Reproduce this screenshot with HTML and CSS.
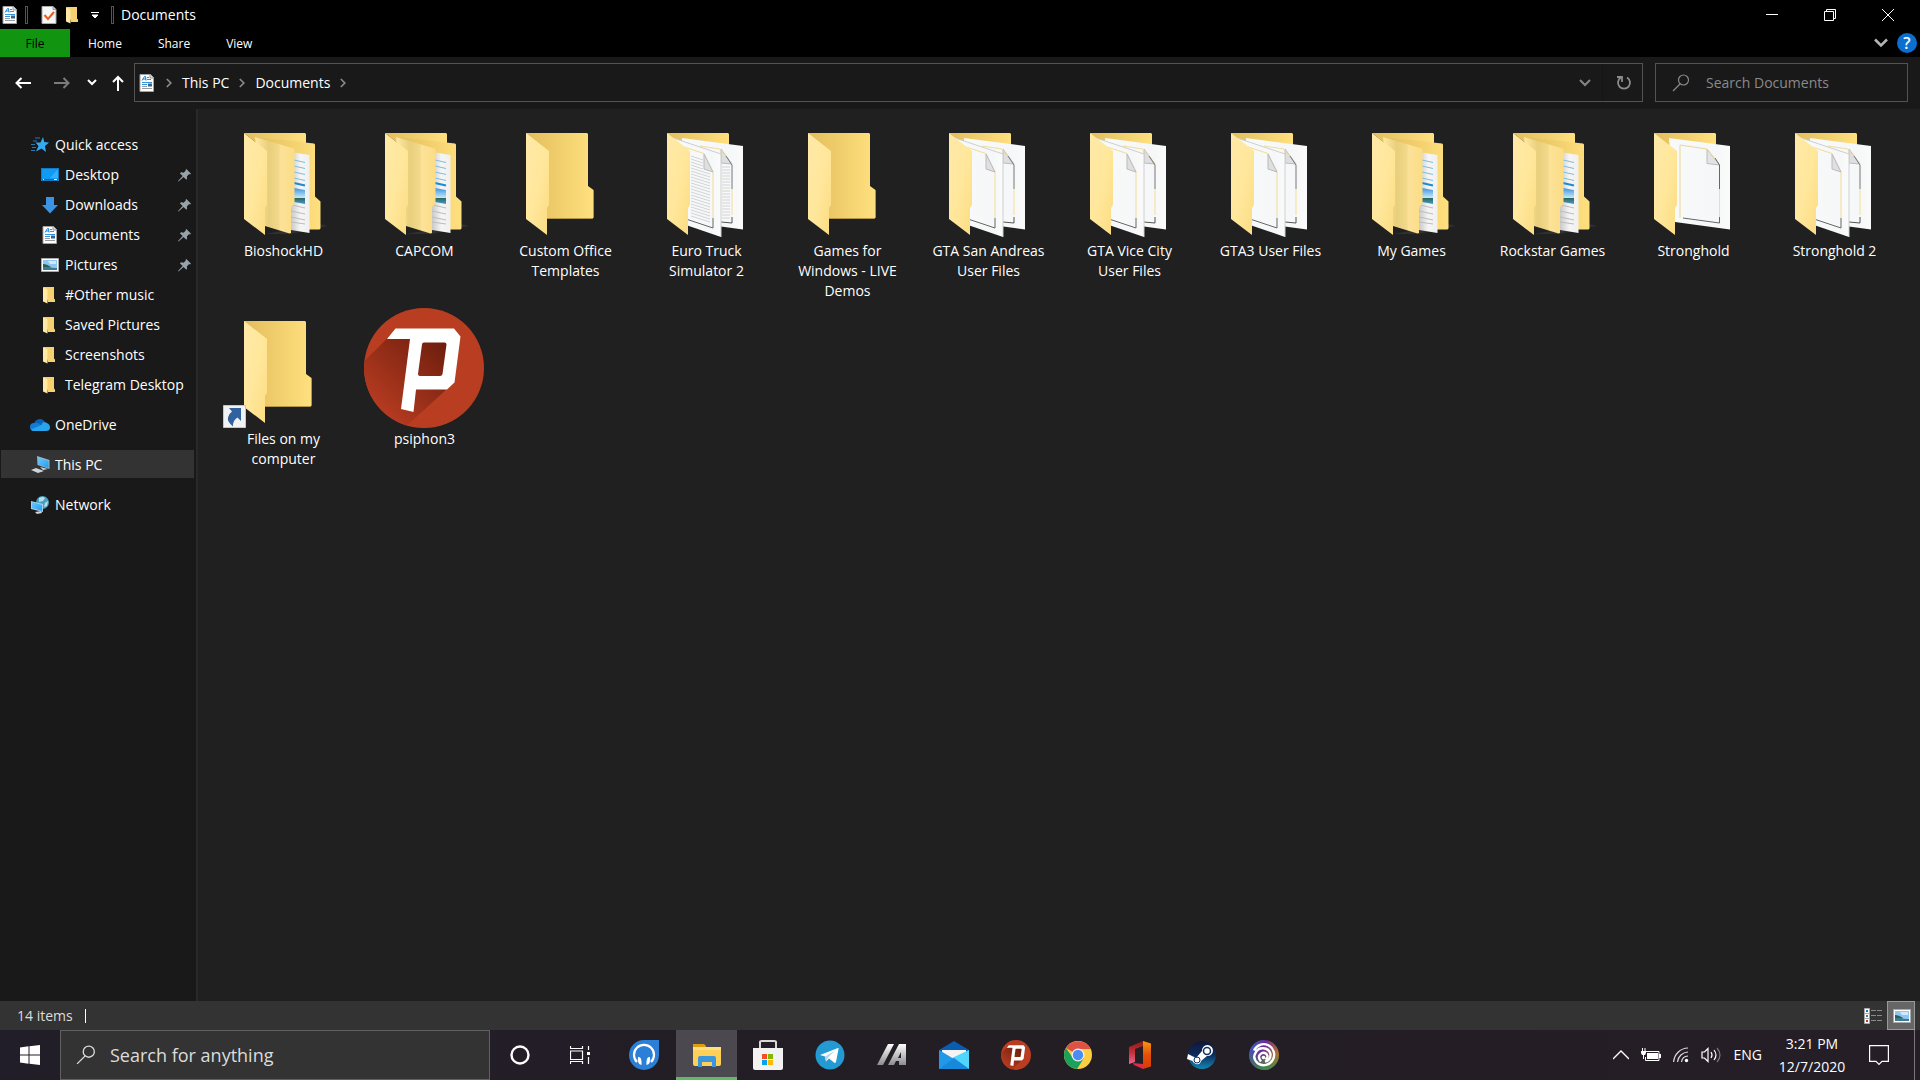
FILE: index.html
```html
<!DOCTYPE html>
<html lang="en">
<head>
<meta charset="utf-8">
<title>Documents</title>
<link rel="stylesheet" href="styles.css">
</head>
<body>
<svg class="sprite" width="0" height="0" aria-hidden="true">
  <defs>
    <linearGradient id="g-back"><stop offset="0" stop-color="#e3bd5b"/><stop offset="1" stop-color="#ffe07f"/></linearGradient>
    <linearGradient id="g-flap" x2="1" y2="1"><stop offset="0" stop-color="#ffe9a8"/><stop offset=".5" stop-color="#ffe79c"/><stop offset="1" stop-color="#fcdc82"/></linearGradient>
    <linearGradient id="g-inner"><stop offset="0" stop-color="#ffe8a2"/><stop offset=".35" stop-color="#e8cf7d"/><stop offset=".6" stop-color="#f2d98a"/><stop offset=".65" stop-color="#fce299"/><stop offset="1" stop-color="#fcdd85"/></linearGradient>
    <linearGradient id="g-paper"><stop offset="0" stop-color="#f8fafa"/><stop offset=".8" stop-color="#f6f7f8"/><stop offset="1" stop-color="#fbfbfb"/></linearGradient>
    <linearGradient id="g-page"><stop offset="0" stop-color="#c9c9c9"/><stop offset=".5" stop-color="#f5f5f5"/><stop offset="1" stop-color="#f0f0f0"/></linearGradient>
    <linearGradient id="g-sky" x2="0" y2="1"><stop offset="0" stop-color="#3a96e4"/><stop offset=".6" stop-color="#c5e6f7"/><stop offset=".65" stop-color="#2d6a5c"/><stop offset="1" stop-color="#4799cf"/></linearGradient>
    <linearGradient id="g-shade" x1="1" y1="0" x2="0" y2="1"><stop offset="0.1" stop-color="#701f0e"/><stop offset=".8" stop-color="#b33a20"/></linearGradient>
    <linearGradient id="g-screen" x2="1" y2="1"><stop offset="0" stop-color="#6ec6fb"/><stop offset=".5" stop-color="#45b3fa"/><stop offset="1" stop-color="#1e9df5"/></linearGradient>
    <linearGradient id="g-silver" x2="0" y2="1"><stop offset="0" stop-color="#fff"/><stop offset="1" stop-color="#8d8d90"/></linearGradient>
    <linearGradient id="g-steam" x2="0" y2="1"><stop offset="0" stop-color="#10163a"/><stop offset=".5" stop-color="#0d2d5c"/><stop offset="1" stop-color="#1287b8"/></linearGradient>
    <linearGradient id="g-office" x2="0" y2="1"><stop offset="0" stop-color="#f69a10"/><stop offset=".5" stop-color="#e2500b"/><stop offset="1" stop-color="#d83b01"/></linearGradient>
    <linearGradient id="g-officeleft" x2="0" y2="1"><stop offset="0" stop-color="#8b1a10"/><stop offset=".5" stop-color="#c62f3a"/><stop offset="1" stop-color="#e66a8e"/></linearGradient>
    <linearGradient id="g-ubi" x2="1" y2=".4"><stop offset="0" stop-color="#2b6fc0"/><stop offset=".5" stop-color="#6d2a9b"/><stop offset="1" stop-color="#b8722a"/></linearGradient>
    <linearGradient id="g-ubi2" x2="0" y2="1"><stop offset=".4" stop-color="#3b8a3c" stop-opacity="0"/><stop offset="1" stop-color="#3a8a52"/></linearGradient>

    <symbol id="doc" viewBox="0 0 18 18">
      <path d="M2 .5h10.500l3 3v14h-13.500z" fill="#fdfdfd" stroke="#a3a3a3"/><path d="M12 .5v3.500h3.500" fill="#ddd" stroke="#999"/>
      <path d="M4 6.500 6.500 2.500h1l.5 4M5 5h3" fill="none" stroke="#1784d6"/><path d="M9 3.500h2M9 5.500h4M4 8.500h10M4 10.500h5" stroke="#3294dc"/><path d="M4 12.500h5M4 14.500h10" stroke="#999"/><path d="M10 9.500h4v3h-4z" fill="#34658d"/>
    </symbol>
    <symbol id="check" viewBox="0 0 18 18"><path d="M2 .5h11l3 3v14h-14z" fill="#f7f7f7" stroke="#aaa"/><path d="M13 .5v3h3" fill="#ccc" stroke="#999"/><path d="m4.500 9 3.500 4 6-7" fill="none" stroke="#ee5a1c" stroke-width="2"/></symbol>
    <symbol id="mini" viewBox="0 0 18 18"><path d="M2.500 1h10.500v11.500l1 1v2.500h-7z" fill="#f5d171"/><path d="m2 1 4.500 2.500v14l-4.500-2z" fill="#ffe9a5"/></symbol>
    <symbol id="star" viewBox="0 0 18 18"><path d="m12 1 1.300 5 4.700.5-4 3.500 1 6-4.500-3.500-5.500 3 2.500-5.500-3-3.500h5z" fill="#35a8f0"/><path d="M4 2h5M2 5h4M0 8.500h4M1 11.500h4M0 14.500h4" stroke="#2579b5"/></symbol>
    <symbol id="desktop" viewBox="0 0 18 18"><path d="M0 2h18v13h-18z" fill="#0f9bf5"/><path d="M9 12 17 3v9z" fill="#34b0fa"/><path d="M.5 2.500h17v12h-17z" fill="none" stroke="#1479be"/><path d="M1 13.500h16" stroke="#0b69ae"/><path d="M2 13.500h1M13 13.500h3" stroke="#fff"/></symbol>
    <symbol id="down" viewBox="0 0 18 18"><path d="M5 1h8v8h4l-8 8.500-8-8.500h4z" fill="#3a93e4"/></symbol>
    <symbol id="pic" viewBox="0 0 18 18"><path d="M.5 2.500h17v13h-17z" fill="#fff" stroke="#aaa"/><path d="M2 4h14v10h-14z" fill="#8ec6f2"/><path d="M2 8q4 1 6 2.500t8 1.500v2h-14z" fill="#3d7a92"/><path d="M2 8q4 0 8 3h-8z" fill="#28614c"/><path d="M7 5h8v3h-6z" fill="#d2e8f8"/></symbol>
    <symbol id="cloud" viewBox="0 0 20 14"><path d="M4 6a6 6 0 0 1 11-2q-5 3-7 5z" fill="#0a62b8"/><path d="M4 13a4 4 0 0 1 0-8q4-1 7 2l4 6z" fill="#127cd5"/><path d="M11 7q2-4 5-2.500 4 1.500 4 5t-4 3.500H4q-2 0-3-1.500z" fill="#27a4ec"/></symbol>
    <symbol id="pc" viewBox="0 0 20 18"><path d="m7 0 12.500 4v9l-12-4z" fill="#9bb4c4"/><path d="m8 1.500 10.500 3.500v7l-10-3.500z" fill="url(#g-screen)"/><path d="m10 11 8 2-5 1zM1 14l5-2 8 3-6 2z" fill="#cdd3d8"/></symbol>
    <symbol id="net" viewBox="0 0 18 18"><circle cx="11.500" cy="6.500" r="6.500" fill="#4a9ec2"/><path d="M8 2q4-2 6 0l-2 3-4 1zM14 7l3-2-1 5-3 1z" fill="#b5dfe8"/><path d="m0 5 12 3v8l-12-3z" fill="#a9cde6"/><path d="m1 6 10 3v6L1 12z" fill="url(#g-screen)"/><path d="m4 16 6-1 1 2-5 1z" fill="#d0d5d8"/></symbol>
    <symbol id="pin" viewBox="0 0 14 14"><path d="m9 0 5 5-1 1-1-.5-2.500 2.500q1 2-.5 3.500L6 8.500.5 13.500 0 13 5 7.500 2 4.500Q3.500 3 6 4l2.500-2.500L8 1z" fill="#98a2a9"/></symbol>
    <symbol id="right" viewBox="0 0 6 10"><path d="m.8 1 4 4-4 4" fill="none" stroke="#8a8a8a" stroke-width="1.700"/></symbol>
    <symbol id="lens" viewBox="0 0 18 18"><circle cx="11.500" cy="6" r="5" fill="none" stroke="currentColor" stroke-width="1.200"/><path d="m8 10-7 7" stroke="currentColor" stroke-width="1.200"/></symbol>

    <symbol id="flap" viewBox="0 0 120 120"><path d="m21 13 23 18v54l-2 3v27L21 99z" fill="url(#g-flap)"/></symbol>
    <symbol id="empty" viewBox="0 0 120 120"><path d="M21 13h61l1 1v52l5.500 4v27l-1 1.500H40z" fill="url(#g-back)"/><path d="M42 98.500h45.500l1-1v-27" fill="none" stroke="#b49643"/><use href="#flap"/></symbol>
    <symbol id="docs" viewBox="0 0 120 120">
      <path d="m42 114 55-10 8 2-17 3-20 5z" fill="#303030"/><path d="M21 13h61l1 1v14H40z" fill="url(#g-back)"/><path d="m32 17 59 6.500 1 1v52l5.500 5v27l-1 1H70z" fill="url(#g-back)"/>
      <path d="m68 32 18.500 3v78L68 110z" fill="url(#g-page)"/><path d="m71 40 11 2.500M71 46l11 2.500M71 52l11 2.500M71 58l11 2.500" stroke="#79bddf"/><path d="m71 63 11 2.500" stroke="#1c8bd0" stroke-width="2"/><path d="m71 68 11 2v14l-11-2z" fill="url(#g-sky)"/><path d="m69 85 13 3m-14 3 14 3m-14 3 14 3m-14 2 14 2" stroke="#bcbcbc"/>
      <path d="m32 17 38.500 11.500 1 1.500v54L68 87v26l-1.500 .5L42 106z" fill="url(#g-inner)"/><use href="#flap"/>
    </symbol>
    <symbol id="papers" viewBox="0 0 120 120">
      <path d="M21 13h61l1 1v40H40z" fill="url(#g-back)"/>
      <g transform="translate(-4)">
        <path d="m40 18 61 8v83.500L46 102z" fill="url(#g-paper)"/><path d="m79 29 11 15-11-1z" fill="#dedfe1" stroke="#bcbcbc"/>
        <path d="m58 26 20 3 12 15" fill="none" stroke="#f0dc9b"/><path d="M84 36l6 9v24" fill="none" stroke="#777"/><path d="M90 69v26" stroke="#f6df96"/><path d="M90 97v6l-11-1" fill="none" stroke="#555"/>
        <path d="m31 18 48 16v83l-35-12z" fill="url(#g-paper)"/><path d="m31 18 48 16v83" fill="none" stroke="#cfcfcf"/><path d="m42 27 20 6.500 9 18.500v46" fill="none" stroke="#f2dc96"/><path d="M62 34v15l9 3z" fill="#dfdfe1" stroke="#bbb"/><path d="M71 98v10l-27-9" fill="none" stroke="#666"/>
      </g>
      <use href="#flap"/>
    </symbol>
    <symbol id="lined" viewBox="0 0 120 120">
      <use href="#papers"/>
      <path d="M76 47h8M76 50h8M76 53h8M76 56h8M76 59h8M76 62h8M76 65h8M76 68h8M76 71h8M76 74h8M76 77h8M76 80h8M76 83h8M76 86h8M76 89h8M76 92h8M76 95h8M76 98h8" stroke="#d4d4d4"/>
      <path d="m45 36 12 4m-12-1 12 4m-12-1 12 4m-12-1 12 4m-12-1 19 6m-19-3 19 6m-19-3 19 6m-19-3 19 6m-19-3 19 6m-19-3 19 6m-19-3 19 6m-19-3 19 6m-19-3 19 6m-19-3 19 6m-19-3 19 6m-19-3 19 6m-19-3 19 6m-19-3 19 6m-19-3 19 6m-19-3 19 6m-19-3 19 6" stroke="#d2d4d5"/>
    </symbol>
    <symbol id="single" viewBox="0 0 120 120">
      <path d="M21 13h61l1 1v40H40z" fill="url(#g-back)"/><path d="m36 18 61 8v83.500L42 102z" fill="url(#g-paper)"/><path d="m74 29 12.500 16-12.500-1.500z" fill="#e3e3e5" stroke="#bbb"/><path d="M47 98V25l27 4 12.500 16" fill="none" stroke="#ead69a"/><path d="M82 38l4.500 7v24" fill="none" stroke="#666"/><path d="M86.500 69v28" stroke="#f6df96"/><path d="M86.500 97v6L50 98" fill="none" stroke="#666"/><use href="#flap"/>
    </symbol>
    <symbol id="shortcut" viewBox="0 0 120 120"><use href="#empty"/><path d="M.5 97.500h22v22H.5z" fill="#f1f2f3" stroke="#c5c5c5"/><path d="M6 100h12v13l-3.500-3.500q-5 3-4.500 9-6-5-5-9 1-4 4-6z" fill="#31629f"/></symbol>
    <symbol id="psiphon" viewBox="0 0 120 120"><circle cx="60" cy="60" r="60" fill="#b93e21"/><path d="M23 30.500 0.500 53A60 60 0 0 0 43 117.500L83 81l7-50z" fill="url(#g-shade)"/><path fill-rule="evenodd" d="M31.500 20.500H90l6.500 8-6 46-7.500 7H52l-2.500 22.500-12.500-3L46 31H23zM60 34.500q-2 0-2 2L54 66q0 2 2 2h20q2 0 2.500-2l4-29.500q0-2-2-2z" fill="#fff"/></symbol>
  </defs>
</svg>

<div class="window">
  <header class="titlebar">
    <div class="quick">
      <svg class="i18"><use href="#doc"/></svg><span class="rule"></span>
      <button aria-label="Properties"><svg class="i18"><use href="#check"/></svg></button>
      <button aria-label="New folder"><svg class="i18"><use href="#mini"/></svg></button>
      <button class="more" aria-label="Customize"><svg width="8" height="6"><path d="M0 .5h8M1 3h6L4 6z" stroke="#fff" stroke-width="1" fill="#fff"/></svg></button>
      <span class="rule"></span>
    </div>
    <h1>Documents</h1>
    <div class="controls">
      <button aria-label="Minimize"><svg width="12" height="12"><path d="M0 5.500h12" stroke="#fff"/></svg></button>
      <button aria-label="Restore"><svg width="12" height="12" fill="none" stroke="#fff"><path d="M.5 2.500h9v9h-9zM2.500 2V.5h9v9H10"/></svg></button>
      <button aria-label="Close"><svg width="12" height="12" stroke="#fff"><path d="m0 0 12 12M12 0 0 12"/></svg></button>
    </div>
  </header>

  <nav class="ribbon">
    <button class="file">File</button><button>Home</button><button>Share</button><button>View</button>
    <div class="ribbon-end">
      <button aria-label="Expand ribbon"><svg width="14" height="10"><path d="m1 1.500 6 6 6-6" fill="none" stroke="#b5b5b5" stroke-width="2.500"/></svg></button>
      <button class="help" aria-label="Help">?</button>
    </div>
  </nav>

  <div class="toolbar">
    <div class="history">
      <button aria-label="Back"><svg width="16" height="12"><path d="M16 6H2M6.500 1l-5 5 5 5" fill="none" stroke="#fff" stroke-width="2"/></svg></button>
      <button aria-label="Forward"><svg width="16" height="12"><path d="M0 6h14M9.500 1l5 5-5 5" fill="none" stroke="#7c7c7c" stroke-width="2"/></svg></button>
      <button class="recent" aria-label="Recent"><svg width="10" height="7"><path d="m1 1 4 4 4-4" fill="none" stroke="#fff" stroke-width="2"/></svg></button>
      <button class="up" aria-label="Up"><svg width="12" height="16"><path d="M6 16V2M1 7l5-5 5 5" fill="none" stroke="#fff" stroke-width="2"/></svg></button>
    </div>
    <div class="address">
      <svg class="i18"><use href="#doc"/></svg>
      <svg class="sep"><use href="#right"/></svg><a href="#pc">This PC</a>
      <svg class="sep"><use href="#right"/></svg><a href="#documents">Documents</a>
      <svg class="sep"><use href="#right"/></svg>
      <button class="drop" aria-label="Previous locations"><svg width="12" height="8"><path d="m1 1 5 5 5-5" fill="none" stroke="#858585" stroke-width="2"/></svg></button>
      <button class="refresh" aria-label="Refresh"><svg width="16" height="16"><path d="M5 2.500A6 6 0 1 0 11 2.500M1 2h5v5" fill="none" stroke="#8c8c8c" stroke-width="1.800"/></svg></button>
    </div>
    <label class="find"><svg class="i18"><use href="#lens"/></svg><input type="search" placeholder="Search Documents" aria-label="Search Documents"></label>
  </div>

  <div class="body">
    <nav class="side">
      <ul>
        <li><a href="#quick"><svg class="i18"><use href="#star"/></svg>Quick access</a></li>
        <li class="sub"><a href="#d1"><svg class="i18"><use href="#desktop"/></svg>Desktop<svg class="pin"><use href="#pin"/></svg></a></li>
        <li class="sub"><a href="#d2"><svg class="i18"><use href="#down"/></svg>Downloads<svg class="pin"><use href="#pin"/></svg></a></li>
        <li class="sub"><a href="#d3"><svg class="i18"><use href="#doc"/></svg>Documents<svg class="pin"><use href="#pin"/></svg></a></li>
        <li class="sub"><a href="#d4"><svg class="i18"><use href="#pic"/></svg>Pictures<svg class="pin"><use href="#pin"/></svg></a></li>
        <li class="sub"><a href="#d5"><svg class="i18"><use href="#mini"/></svg>#Other music</a></li>
        <li class="sub"><a href="#d6"><svg class="i18"><use href="#mini"/></svg>Saved Pictures</a></li>
        <li class="sub"><a href="#d7"><svg class="i18"><use href="#mini"/></svg>Screenshots</a></li>
        <li class="sub"><a href="#d8"><svg class="i18"><use href="#mini"/></svg>Telegram Desktop</a></li>
      </ul>
      <ul><li><a href="#onedrive"><svg class="i20"><use href="#cloud"/></svg>OneDrive</a></li></ul>
      <ul><li class="current"><a href="#pc"><svg class="i20"><use href="#pc"/></svg>This PC</a></li></ul>
      <ul><li><a href="#network"><svg class="i18"><use href="#net"/></svg>Network</a></li></ul>
    </nav>
    <main class="files">
      <button><svg><use href="#docs"/></svg>BioshockHD</button>
      <button><svg><use href="#docs"/></svg>CAPCOM</button>
      <button><svg><use href="#empty"/></svg>Custom Office Templates</button>
      <button><svg><use href="#lined"/></svg>Euro Truck Simulator 2</button>
      <button><svg><use href="#empty"/></svg>Games for Windows - LIVE Demos</button>
      <button><svg><use href="#papers"/></svg>GTA San Andreas User Files</button>
      <button><svg><use href="#papers"/></svg>GTA Vice City User Files</button>
      <button><svg><use href="#papers"/></svg>GTA3 User Files</button>
      <button><svg><use href="#docs"/></svg>My Games</button>
      <button><svg><use href="#docs"/></svg>Rockstar Games</button>
      <button><svg><use href="#single"/></svg>Stronghold</button>
      <button><svg><use href="#papers"/></svg>Stronghold 2</button>
      <button><svg><use href="#shortcut"/></svg>Files on my computer</button>
      <button><svg><use href="#psiphon"/></svg>psiphon3</button>
    </main>
  </div>

  <footer class="status">
    <span class="count">14 items</span>
    <div class="views">
      <button aria-label="Details"><svg width="18" height="16"><path d="M.5 .5h5v15h-5z" fill="#fff" stroke="#aaa"/><path d="M0 5.500h6M0 10.500h6" stroke="#aaa"/><path d="M2 2h2v2H2z" fill="#2b6cb0"/><path d="M2 7h2v2H2z" fill="#3a7f9c"/><path d="M2 12h2v2H2z" fill="#c53030"/><path d="M7 2.500h5m1 0h5M7 7.500h5m1 0h5M7 12.500h5m1 0h5" stroke="#8a8a8a"/></svg></button>
      <button class="on" aria-label="Large icons"><svg class="i18"><use href="#pic"/></svg></button>
    </div>
  </footer>
</div>

<div class="taskbar">
  <button class="start" aria-label="Start"><svg width="20" height="20" viewBox="0 0 20 20" fill="#fff"><path d="m0 2.500 8.500-1.200V9.500H0zM9.500 1.200 20 0v9.500H9.500zM0 10.500h8.500v8.200L0 17.500zM9.500 10.500H20V20L9.500 18.800z"/></svg></button>
  <label class="ask"><svg width="20" height="20"><use href="#lens"/></svg><input type="search" placeholder="Search for anything" aria-label="Search for anything"></label>
  <div class="tools">
    <button aria-label="Cortana"><svg width="20" height="20"><circle cx="10" cy="10" r="8.500" fill="none" stroke="#fff" stroke-width="2.400"/></svg></button>
    <button aria-label="Task view"><svg width="20" height="20" fill="none" stroke="#fff"><path d="M.5 1v2.500h12V1M.5 6h12v8.500h-12zM.5 19v-2.500h12V19M18.500 1v4M18.500 12v7" stroke-width="1.200"/><path d="M17 7h3v3h-3z" fill="#fff" stroke="none"/></svg></button>
  </div>
  <div class="apps">
    <button aria-label="Headphones"><svg width="30" height="30"><path d="M15 0h15v15A15 15 0 1 1 15 0z" fill="#2b7fd6"/><path d="M8 22a10 10 0 1 1 14 0" fill="none" stroke="#fff" stroke-width="2.200"/><path d="M9 17q4-1 3.500 8Q8 24 9 17zM21 17q-4-1-3.500 8 4.500-1 3.500-8z" fill="#fff"/></svg></button>
    <button class="active" aria-label="File Explorer"><svg width="28" height="24"><path d="M0 1h11l2 2v3H0z" fill="#e09c0b"/><path d="M0 4h28v17q0 2-2 2H2q-2 0-2-2z" fill="#ffd058"/><path d="M0 4h28v3H0z" fill="#ffdf86"/><path d="M5 24v-9q0-2 2-2h14q2 0 2 2v9h-4v-5H9v5z" fill="#3c96dc"/></svg></button>
    <button aria-label="Store"><svg width="30" height="30"><path d="M7 9V2q0-1 2-1h12q2 0 2 1v7" fill="none" stroke="#d9d9d9" stroke-width="2"/><path d="M0 8h30v20q0 2-2 2H2q-2 0-2-2z" fill="#f2f2f2"/><path d="M9 14h5v5H9z" fill="#f25022"/><path d="M15 14h5v5h-5z" fill="#7fba00"/><path d="M9 20h5v5H9z" fill="#00a4ef"/><path d="M15 20h5v5h-5z" fill="#ffb900"/></svg></button>
    <button aria-label="Telegram"><svg width="30" height="30"><circle cx="15" cy="15" r="14.500" fill="#239ad2"/><path d="m5 15 18-7q1 0 .5 1L21 22q-1 1.500-2 .5l-5-4-3 3-1-5z" fill="#fff"/><path d="m10 16.500 10-6-7 7-2 4z" fill="#b8d5e6"/></svg></button>
    <button aria-label="Mixed app"><svg width="30" height="22"><path d="M11 0h6L6 21H0zM22 0h7v21h-7v-4h-3l-2 4h-6zM24 8l-3 6h3z" fill="url(#g-silver)" fill-rule="evenodd"/></svg></button>
    <button aria-label="Mail"><svg width="30" height="28"><path d="M0 9 15 0l15 9v4H0z" fill="#0a5cae"/><path d="M3 9h24v8H3z" fill="#f4f4f4"/><path d="m0 9 15 9 15-9v19H0z" fill="#2298e8"/><path d="M30 9v19L13 17z" fill="#50d5fb"/><path d="M0 28h30L15 17z" fill="#1789dc"/></svg></button>
    <button aria-label="Psiphon"><svg width="30" height="30"><use href="#psiphon"/></svg></button>
    <button aria-label="Chrome"><svg width="28" height="28" viewBox="0 0 28 28"><circle cx="14" cy="14" r="14" fill="#ffcd41"/><path d="M14 14 2 7a14 14 0 0 1 24.500 1H14z" fill="#de5246"/><path d="M1.900 7A14 14 0 0 0 13 28l7-11-6 3-5-3z" fill="#1aa15e"/><circle cx="14" cy="14" r="6.500" fill="#f1f1f1"/><circle cx="14" cy="14" r="5.200" fill="#4a8bf4"/></svg></button>
    <button aria-label="Office"><svg width="24" height="28"><path d="m1 6 14-6v5L7 8v13l-6 2z" fill="url(#g-officeleft)"/><path d="m5 22 10 1v5l-9-4z" fill="#e2284b"/><path d="m15 0 8 2.500v23L15 28z" fill="url(#g-office)"/></svg></button>
    <button aria-label="Steam"><svg width="30" height="28"><circle cx="15" cy="14" r="14" fill="url(#g-steam)"/><path d="m1 13 8 4 6-7a5.500 5.500 0 1 1 5 5l-6 5q-1 4-5 3-3-1-3.500-3L0 18z" fill="#fff"/><circle cx="20" cy="10" r="3.500" fill="none" stroke="#12305c" stroke-width="1.500"/><circle cx="10" cy="19" r="3" fill="none" stroke="#12305c"/></svg></button>
    <button aria-label="Ubisoft"><svg width="30" height="30"><circle cx="15" cy="15" r="15" fill="url(#g-ubi)"/><circle cx="15" cy="15" r="15" fill="url(#g-ubi2)"/><path d="M5 10.500A10.500 10.500 0 1 1 9 23.500Q3 18 6.500 13A8 8 0 0 1 21.500 14Q22 20 16 21.500" fill="none" stroke="#fff" stroke-width="2.400"/><path d="M12 21.500Q8.500 17 11 14.500q3-3 6.500-.5 2.500 3-1 5.500" fill="none" stroke="#fff" stroke-width="2.400"/><circle cx="14.500" cy="17.500" r="1.800" fill="#fff"/></svg></button>
  </div>
  <div class="tray">
    <button aria-label="Hidden icons"><svg width="16" height="10"><path d="m0 9 8-8 8 8" fill="none" stroke="#fff" stroke-width="1.300"/></svg></button>
    <button aria-label="Battery"><svg width="20" height="14"><path d="M5 3.500h13v9H4.500V9" fill="none" stroke="#fff"/><path d="M6 5h11v6H6zM18 6h2v4h-2zM0 3h5v2L4 7H1L0 5zM1 0h1v3H1zM3.500 0h1v3h-1zM2 7h1v4H2z" fill="#fff"/></svg></button>
    <button aria-label="Wi-Fi"><svg width="16" height="16" fill="none" stroke="#ddd" stroke-width="1.200"><path d="M.6 15A15 15 0 0 1 15 1M4.500 15A11 11 0 0 1 15 5M8.500 15A7 7 0 0 1 15 9"/><circle cx="13.500" cy="13.500" r="1.700" fill="#fff" stroke="none"/></svg></button>
    <button aria-label="Volume"><svg width="20" height="18" fill="none" stroke="#fff" stroke-width="1.200"><path d="M1 6h2.500L7 2.500v13L3.500 12H1zM10 6q2 3 0 6M13 4q4 5 0 10"/><path d="M16 2q6 7 0 14" stroke="#777"/></svg></button>
    <button class="lang">ENG</button>
    <button class="clock"><time>3:21 PM</time><time>12/7/2020</time></button>
    <button aria-label="Notifications"><svg width="20" height="20"><path d="M.6 .6h18.800v15.800H13l-3 3-3-3H.6z" fill="none" stroke="#fff" stroke-width="1.200"/></svg></button>
    <button class="peek" aria-label="Show desktop"></button>
  </div>
</div>
</body>
</html>
```
FILE: styles.css
```css
* { box-sizing: border-box; }
body {
  margin: 0;
  min-height: 100vh;
  display: flex;
  flex-direction: column;
  background: #202020;
  color: #fff;
  font: 14px/20px "Open Sans", "Noto Sans", sans-serif;
}
button, input {
  margin: 0;
  padding: 0;
  border: 0;
  background: none;
  color: inherit;
  font: inherit;
}
button { display: flex; align-items: center; justify-content: center; }
a { color: inherit; text-decoration: none; }
ul { margin: 0; padding: 0; list-style: none; }
svg { display: block; flex: none; }
.sprite { position: absolute; }
.i18 { width: 18px; height: 18px; }
.i20 { width: 20px; height: 18px; }
.window { flex: 1; display: flex; flex-direction: column; }

/* Title bar */
.titlebar { display: flex; align-items: center; height: 29px; background: #000; }
.quick { display: flex; align-items: center; padding-left: 1px; }
.rule { width: 3px; height: 18px; margin: 0 6px; border: 1px solid #555; }
.quick button { margin-left: 6px; }
.quick .more { width: 8px; margin: 0 12px 0 9px; }
.quick .rule:last-child { margin: 0 7px 0 0; }
.titlebar h1 { margin: 0; font-size: 14px; font-weight: 400; }
.controls { display: flex; margin: 0 3px 0 auto; }
.controls button { width: 58px; height: 28px; }

/* Ribbon */
.ribbon { display: flex; height: 28px; background: #000; font-size: 12px; }
.ribbon > button { padding: 2px 18px 0; }
.ribbon .file { width: 70px; background: #119511; color: #000; }
.ribbon-end { display: flex; align-items: center; gap: 9px; margin: 0 3px 0 auto; }
.ribbon .help { width: 20px; height: 20px; border-radius: 50%; background: #0a6fd0; font-size: 16px; font-weight: 600; }

/* Address row */
.toolbar { display: flex; align-items: center; gap: 12px; height: 52px; padding: 0 12px 1px 0; background: #191919; }
.history { display: flex; align-items: center; width: 122px; padding-left: 15px; }
.history button + button { margin-left: 23px; }
.history .recent.recent { margin-left: 17px; }
.history .up.up { margin-left: 15px; }
.address { flex: 1; display: flex; align-items: center; height: 39px; padding-left: 3px; border: 1px solid #535353; }
.sep { width: 6px; height: 10px; margin: 0 10px; }
.drop { width: 36px; height: 37px; margin-left: auto; border-right: 1px solid #141414; }
.refresh { width: 39px; height: 37px; padding-left: 2px; }
.find { display: flex; align-items: center; gap: 16px; width: 253px; height: 39px; padding-left: 16px; border: 1px solid #535353; color: #8a8a8a; }
input { flex: 1; min-width: 0; height: 100%; outline: 0; }
input::placeholder { color: inherit; opacity: 1; }

/* Body */
.body { flex: 1; display: flex; }
.side { display: flex; flex-direction: column; gap: 12px; width: 198px; padding: 21px 2px 0 1px; border-right: 2px solid #292929; background: #191919; }
.side ul { display: grid; gap: 2px; }
.side a { display: flex; align-items: center; gap: 6px; height: 28px; padding: 2px 0 0 30px; }
.side .i20 { margin: 0 -1px; }
.side .sub a { padding-left: 40px; }
.side .current { background: #333; }
.pin { width: 13px; height: 13px; margin: 0 3px 0 auto; }
.files { flex: 1; display: grid; grid-template-columns: repeat(auto-fill, 141px); align-content: start; gap: 7px 0; padding: 11px 0 0 15px; }
.files button { display: flex; flex-direction: column; justify-content: flex-start; padding: 0 12px; }
.files svg { width: 120px; height: 120px; margin: 0 1px 1px 0; }

/* Status bar */
.status { display: flex; align-items: center; justify-content: space-between; height: 29px; padding: 0 5px 0 17px; background: #333; color: #ddd; }
.count { padding-right: 12px; border-right: 1px solid #fff; line-height: 14px; }
.views { display: flex; }
.views button { width: 28px; height: 29px; }
.views .on { padding-left: 2px; border: 1px solid #999; background: #666; }

/* Taskbar */
.taskbar { display: flex; height: 50px; background: linear-gradient(90deg, #221e29, #231d24 50%, #251e27); }
.taskbar .start { width: 60px; }
.ask { display: flex; align-items: center; gap: 14px; width: 430px; padding-left: 15px; border: 1px solid #606060; background: #333; color: #dcdcdc; font-size: 18px; line-height: 28px; }
.tools, .apps, .tray { display: flex; }
.tools button { width: 60px; }
.apps { padding-left: 3px; }
.apps button { width: 62px; }
.apps .active { width: 61px; margin-left: 1px; border-bottom: 3px solid #63b864; background: #4c484f; padding-top: 3px; }
.tray { margin-left: auto; gap: 12px; }
.tray .lang { margin-left: 1px; }
.tray .clock { flex-direction: column; width: 76px; line-height: 23px; }
.tray .clock + button { margin: 0 13px 0 7px; }
.tray .peek { width: 6px; border-left: 1px solid #777; }
```
